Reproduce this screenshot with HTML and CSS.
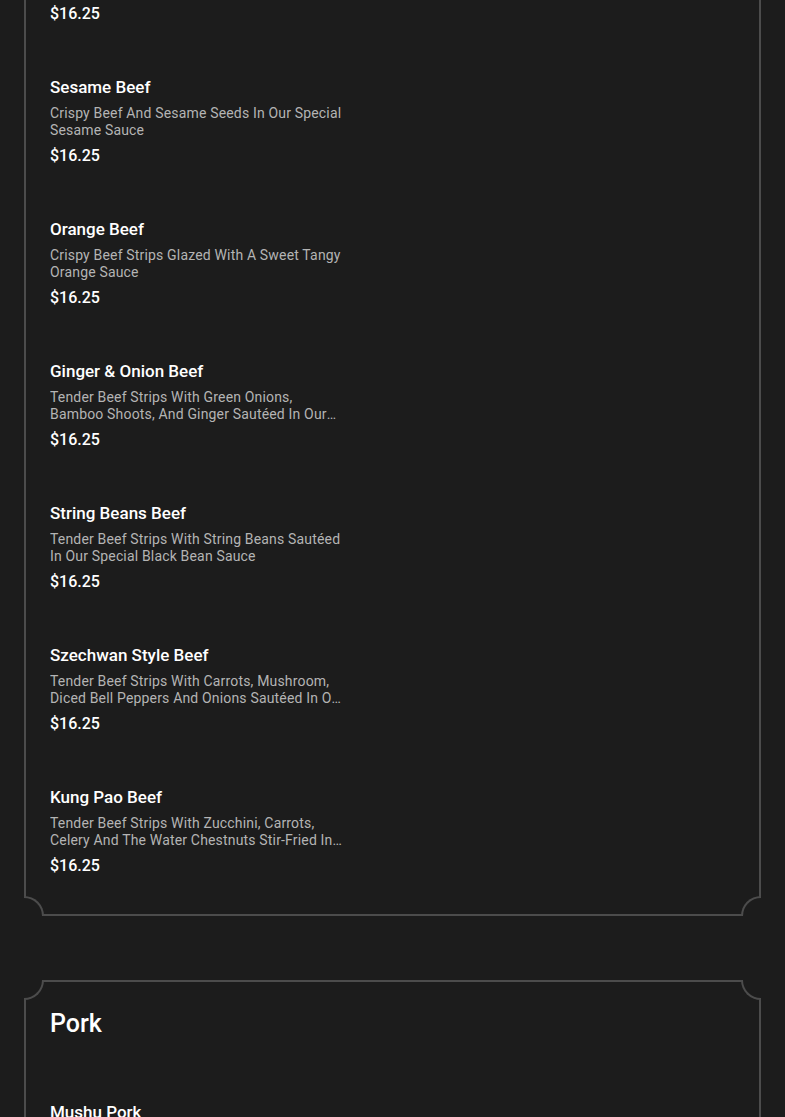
FILE: index.html
```html
<!DOCTYPE html>
<html lang="en">
<head>
<meta charset="utf-8">
<title>Menu</title>
<link rel="stylesheet" href="styles.css">
</head>
<body>
<main class="menu">
  <section class="card">
    <h2 class="card-title">Beef</h2>
    <div class="item">
      <h3 class="item-name">Beef With Broccoli</h3>
      <p class="item-desc">Tender Beef Strips With Fresh Broccoli Sautéed In Our Special Brown Sauce</p>
      <p class="item-price">$16.25</p>
    </div>
    <div class="item">
      <h3 class="item-name">Sesame Beef</h3>
      <p class="item-desc">Crispy Beef And Sesame Seeds In Our Special Sesame Sauce</p>
      <p class="item-price">$16.25</p>
    </div>
    <div class="item">
      <h3 class="item-name">Orange Beef</h3>
      <p class="item-desc">Crispy Beef Strips Glazed With A Sweet Tangy Orange Sauce</p>
      <p class="item-price">$16.25</p>
    </div>
    <div class="item">
      <h3 class="item-name">Ginger &amp; Onion Beef</h3>
      <p class="item-desc">Tender Beef Strips With Green Onions, Bamboo Shoots, And Ginger Sautéed In Our Special Brown Sauce</p>
      <p class="item-price">$16.25</p>
    </div>
    <div class="item">
      <h3 class="item-name">String Beans Beef</h3>
      <p class="item-desc">Tender Beef Strips With String Beans Sautéed In Our Special Black Bean Sauce</p>
      <p class="item-price">$16.25</p>
    </div>
    <div class="item">
      <h3 class="item-name">Szechwan Style Beef</h3>
      <p class="item-desc">Tender Beef Strips With Carrots, Mushroom, Diced Bell Peppers And Onions Sautéed In Our Spicy Szechwan Sauce</p>
      <p class="item-price">$16.25</p>
    </div>
    <div class="item">
      <h3 class="item-name">Kung Pao Beef</h3>
      <p class="item-desc">Tender Beef Strips With Zucchini, Carrots, Celery And The Water Chestnuts Stir-Fried In Our Spicy Kung Pao Sauce With Peanuts</p>
      <p class="item-price">$16.25</p>
    </div>
    <span class="corner corner-tl"></span>
    <span class="corner corner-tr"></span>
    <span class="corner corner-bl"></span>
    <span class="corner corner-br"></span>
  </section>

  <section class="card">
    <h2 class="card-title">Pork</h2>
    <div class="item">
      <h3 class="item-name">Mushu Pork</h3>
      <p class="item-desc">Shredded Pork With Cabbage, Carrots, Bamboo Shoots And Egg Served With Pancakes And Hoisin Sauce</p>
      <p class="item-price">$16.25</p>
    </div>
    <div class="item">
      <h3 class="item-name">Sweet &amp; Sour Pork</h3>
      <p class="item-desc">Crispy Pork With Pineapple, Bell Peppers And Onions In Our Sweet And Sour Sauce</p>
      <p class="item-price">$16.25</p>
    </div>
    <span class="corner corner-tl"></span>
    <span class="corner corner-tr"></span>
    <span class="corner corner-bl"></span>
    <span class="corner corner-br"></span>
  </section>
</main>
</body>
</html>
```

FILE: styles.css
```css
html, body {
  margin: 0;
  padding: 0;
  background: #1c1c1c;
}

body {
  font-family: Roboto, "Liberation Sans", Arial, sans-serif;
  color: #ffffff;
  overflow: hidden;
}

.menu {
  display: flex;
  flex-direction: column;
  gap: 64px;
  padding: 0 24px;
  margin-top: -187px;
}

.card {
  position: relative;
  border: 2px solid #4c4c4c;
  padding: 26px 24px 11px;
  background: #1c1c1c;
}

.card-title {
  margin: 0 0 36px;
  font-size: 25px;
  line-height: 32px;
  font-weight: 500;
  color: #ffffff;
}

.item {
  padding: 27px 0;
}

.item-name {
  margin: -1px 0 8px;
  font-size: 17px;
  line-height: 20px;
  font-weight: 500;
  color: #ffffff;
}

.item-desc {
  margin: 0 0 7px;
  width: 297px;
  font-size: 14px;
  line-height: 17px;
  letter-spacing: 0.17px;
  color: #b4b4b4;
  display: -webkit-box;
  -webkit-line-clamp: 2;
  -webkit-box-orient: vertical;
  overflow: hidden;
  height: 34px;
}

.item-price {
  margin: 0;
  font-size: 16px;
  line-height: 20px;
  font-weight: 500;
  color: #ffffff;
}

.corner {
  position: absolute;
  width: 18px;
  height: 18px;
  background: #1c1c1c;
  border: 0 solid #4c4c4c;
}

.corner-tl {
  top: -2px;
  left: -2px;
  border-bottom-width: 2px;
  border-right-width: 2px;
  border-bottom-right-radius: 20px;
}

.corner-tr {
  top: -2px;
  right: -2px;
  border-bottom-width: 2px;
  border-left-width: 2px;
  border-bottom-left-radius: 20px;
}

.corner-bl {
  bottom: -2px;
  left: -2px;
  border-top-width: 2px;
  border-right-width: 2px;
  border-top-right-radius: 20px;
}

.corner-br {
  bottom: -2px;
  right: -2px;
  border-top-width: 2px;
  border-left-width: 2px;
  border-top-left-radius: 20px;
}
```
